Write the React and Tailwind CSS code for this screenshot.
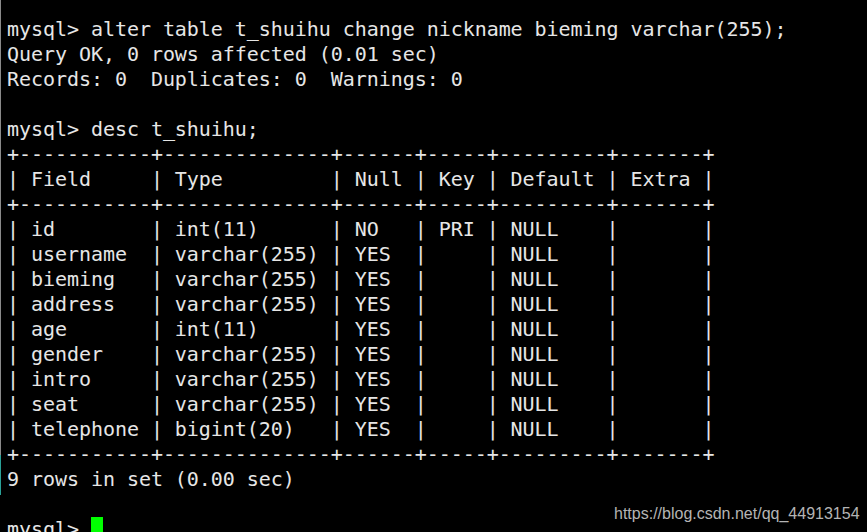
import React from "react";

const lines = [
  "mysql> alter table t_shuihu change nickname bieming varchar(255);",
  "Query OK, 0 rows affected (0.01 sec)",
  "Records: 0  Duplicates: 0  Warnings: 0",
  "",
  "mysql> desc t_shuihu;",
  "+-----------+--------------+------+-----+---------+-------+",
  "| Field     | Type         | Null | Key | Default | Extra |",
  "+-----------+--------------+------+-----+---------+-------+",
  "| id        | int(11)      | NO   | PRI | NULL    |       |",
  "| username  | varchar(255) | YES  |     | NULL    |       |",
  "| bieming   | varchar(255) | YES  |     | NULL    |       |",
  "| address   | varchar(255) | YES  |     | NULL    |       |",
  "| age       | int(11)      | YES  |     | NULL    |       |",
  "| gender    | varchar(255) | YES  |     | NULL    |       |",
  "| intro     | varchar(255) | YES  |     | NULL    |       |",
  "| seat      | varchar(255) | YES  |     | NULL    |       |",
  "| telephone | bigint(20)   | YES  |     | NULL    |       |",
  "+-----------+--------------+------+-----+---------+-------+",
  "9 rows in set (0.00 sec)",
  "",
];

export default function App() {
  return (
    <div className="relative w-[867px] h-[532px] overflow-hidden bg-black flex">
      <div className="w-[1px] flex flex-col shrink-0">
        <div className="h-[455px] bg-[#8a8a8a]" />
        <div className="h-[40px] bg-[#2aa198]" />
        <div className="flex-1 bg-black" />
      </div>
      <div
        className="pl-[6px] pt-[17px] text-[20px] leading-[25px] tracking-[-0.05px] text-[#e6e6e6] whitespace-pre"
        style={{ fontFamily: '"DejaVu Sans Mono", monospace' }}
      >
        {lines.map((l, i) => (
          <div key={i} className="h-[25px]">
            {l}
          </div>
        ))}
        <div className="h-[25px] flex items-start">
          <span>mysql&gt; </span>
          <span className="inline-block w-[12px] h-[20px] bg-[#00ff00]" />
        </div>
      </div>
      <div
        className="absolute left-[614px] top-[502px] text-[16px] text-[#b4b4b4]"
        style={{ fontFamily: '"Liberation Sans", Arial, sans-serif' }}
      >
        https://blog.csdn.net/qq_44913154
      </div>
    </div>
  );
}
